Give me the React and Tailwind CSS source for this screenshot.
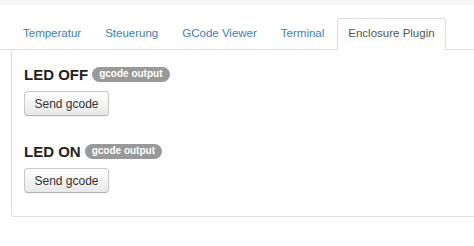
import { useState } from 'react';

const tabs = ['Temperatur', 'Steuerung', 'GCode Viewer', 'Terminal', 'Enclosure Plugin'];

const outputs = [
  { label: 'LED OFF' },
  { label: 'LED ON' },
];

function GcodeBlock({ label, first }) {
  return (
    <div className={first ? '' : 'mt-[25px]'}>
      <div className="flex items-center h-[20px] gap-[4px]">
        <span className="text-[15px] font-bold text-[#222] leading-none">{label}</span>
        <span className="inline-flex items-center h-[15px] px-[7px] rounded-full bg-[#999] text-white text-[10px] font-bold leading-none">
          gcode output
        </span>
      </div>
      <button className="mt-[7px] h-[25px] w-[85px] rounded-[4px] border border-[#c8c8c8] border-b-[#b3b3b3] bg-gradient-to-b from-white to-[#e8e8e8] text-[12px] text-[#333] shadow-[inset_0_1px_0_rgba(255,255,255,0.2),0_1px_2px_rgba(0,0,0,0.05)]">
        Send gcode
      </button>
    </div>
  );
}

export default function App() {
  const [active, setActive] = useState(4);

  return (
    <div className="w-[474px] h-[246px] overflow-hidden bg-white" style={{ fontFamily: '"Liberation Sans", Arial, sans-serif' }}>
      <div className="h-[5px] bg-[#f6f6f6]" />
      <div className="mt-[13px] pl-[12px] flex border-b border-[#ddd] h-[32px]">
        {tabs.map((t, i) => (
          <div
            key={t}
            onClick={() => setActive(i)}
            className={`mr-[2px] px-[10px] h-[32px] flex items-center text-[11.5px] rounded-t-[4px] cursor-pointer border ${
              i === active
                ? 'border-[#ddd] border-b-white bg-white text-[#555]'
                : 'border-transparent text-[#3a7dc0]'
            }`}
          >
            {t}
          </div>
        ))}
      </div>
      <div className="ml-[11px] mr-[-20px] border-l border-r border-b border-[#ddd] rounded-b-[3px] pl-[12px] pt-[14px] pb-[23px]">
        {outputs.map((o, i) => (
          <GcodeBlock key={o.label} label={o.label} first={i === 0} />
        ))}
      </div>
    </div>
  );
}
